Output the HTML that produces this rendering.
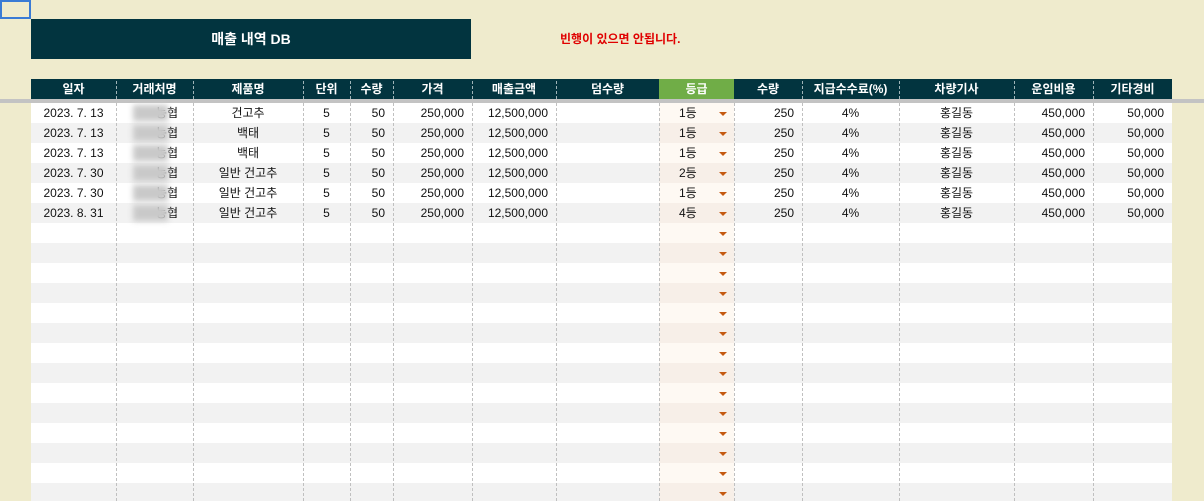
<!DOCTYPE html>
<html><head><meta charset="utf-8"><style>
*{margin:0;padding:0;box-sizing:border-box}
html{width:1204px;height:501px;overflow:hidden}
body{width:1204px;height:501px;overflow:hidden;background:#efebcd;position:relative;font-family:"Liberation Sans","Noto Sans CJK KR",sans-serif;font-size:12px;color:#111}
.sel{position:absolute;left:0;top:0;width:31px;height:19px;border:2px solid #3a7bd5}
.title{position:absolute;left:31px;top:19px;width:440px;height:40px;background:#02343f;color:#fff;font-weight:bold;font-size:14px;text-align:center;line-height:40px}
.warn{position:absolute;left:560px;top:30px;color:#e00000;font-weight:bold;font-size:12px;line-height:18px}
.gl{position:absolute;left:0;top:99px;width:1204px;height:4px;background:#c3c3c3}
.row{position:absolute;left:31px;width:1141px;height:20px;display:flex;line-height:20px;background:#fff}
.hd{top:79px;background:#02343f;color:#fff;font-weight:bold;height:20px}
.row div{flex:none;white-space:nowrap;overflow:hidden}
.c{text-align:center}.r{text-align:right;padding-right:8px}
.w1{width:85px}.w2{width:77px}.w3{width:110px}.w4{width:47px}.w5{width:43px}.w6{width:79px}.w7{width:84px}.w8{width:103px}.w9{width:75px}.w10{width:68px}.w11{width:97px}.w12{width:115px}.w13{width:79px}.w14{width:79px}
.sp{width:525px}
.g{background:#fef9f3;position:relative;padding-left:20px}
.alt{background:#f2f2f2}.alt .g{background:#f7efe8}
.hd .g{background:#70ad47;padding-left:0;text-align:center}
.g i{position:absolute;left:60px;top:9px;width:0;height:0;border-left:4px solid transparent;border-right:4px solid transparent;border-top:4px solid #c55a11}
.v{position:absolute;top:103px;height:398px;border-left:1px dashed #c0c0c0}
.hv{position:absolute;top:81px;height:18px;border-left:1px dashed #9fb4b8}
.blur{position:absolute;left:133px;width:35px;height:16px;background:#c9c9c9;filter:blur(3px)}
</style></head><body>
<div class="sel"></div>
<div class="title">매출 내역 DB</div>
<div class="warn">빈행이 있으면 안됩니다.</div>
<div class="row hd"><div class="w1 c">일자</div><div class="w2 c">거래처명</div><div class="w3 c">제품명</div><div class="w4 c">단위</div><div class="w5 c">수량</div><div class="w6 c">가격</div><div class="w7 c">매출금액</div><div class="w8 c">덤수량</div><div class="w9 g">등급</div><div class="w10 c">수량</div><div class="w11 c">지급수수료(%)</div><div class="w12 c">차량기사</div><div class="w13 c">운임비용</div><div class="w14 c">기타경비</div></div>
<div class="gl"></div>
<div class="row" style="top:103px"><div class="w1 c">2023. 7. 13</div><div class="w2 r" style="padding-right:15px">농협</div><div class="w3 c">건고추</div><div class="w4 c">5</div><div class="w5 r">50</div><div class="w6 r">250,000</div><div class="w7 r">12,500,000</div><div class="w8"></div><div class="w9 g">1등<i></i></div><div class="w10 r">250</div><div class="w11 c">4%</div><div class="w12 c">홍길동</div><div class="w13 r">450,000</div><div class="w14 r">50,000</div></div>
<div class="row alt" style="top:123px"><div class="w1 c">2023. 7. 13</div><div class="w2 r" style="padding-right:15px">농협</div><div class="w3 c">백태</div><div class="w4 c">5</div><div class="w5 r">50</div><div class="w6 r">250,000</div><div class="w7 r">12,500,000</div><div class="w8"></div><div class="w9 g">1등<i></i></div><div class="w10 r">250</div><div class="w11 c">4%</div><div class="w12 c">홍길동</div><div class="w13 r">450,000</div><div class="w14 r">50,000</div></div>
<div class="row" style="top:143px"><div class="w1 c">2023. 7. 13</div><div class="w2 r" style="padding-right:15px">농협</div><div class="w3 c">백태</div><div class="w4 c">5</div><div class="w5 r">50</div><div class="w6 r">250,000</div><div class="w7 r">12,500,000</div><div class="w8"></div><div class="w9 g">1등<i></i></div><div class="w10 r">250</div><div class="w11 c">4%</div><div class="w12 c">홍길동</div><div class="w13 r">450,000</div><div class="w14 r">50,000</div></div>
<div class="row alt" style="top:163px"><div class="w1 c">2023. 7. 30</div><div class="w2 r" style="padding-right:15px">농협</div><div class="w3 c">일반 건고추</div><div class="w4 c">5</div><div class="w5 r">50</div><div class="w6 r">250,000</div><div class="w7 r">12,500,000</div><div class="w8"></div><div class="w9 g">2등<i></i></div><div class="w10 r">250</div><div class="w11 c">4%</div><div class="w12 c">홍길동</div><div class="w13 r">450,000</div><div class="w14 r">50,000</div></div>
<div class="row" style="top:183px"><div class="w1 c">2023. 7. 30</div><div class="w2 r" style="padding-right:15px">농협</div><div class="w3 c">일반 건고추</div><div class="w4 c">5</div><div class="w5 r">50</div><div class="w6 r">250,000</div><div class="w7 r">12,500,000</div><div class="w8"></div><div class="w9 g">1등<i></i></div><div class="w10 r">250</div><div class="w11 c">4%</div><div class="w12 c">홍길동</div><div class="w13 r">450,000</div><div class="w14 r">50,000</div></div>
<div class="row alt" style="top:203px"><div class="w1 c">2023. 8. 31</div><div class="w2 r" style="padding-right:15px">농협</div><div class="w3 c">일반 건고추</div><div class="w4 c">5</div><div class="w5 r">50</div><div class="w6 r">250,000</div><div class="w7 r">12,500,000</div><div class="w8"></div><div class="w9 g">4등<i></i></div><div class="w10 r">250</div><div class="w11 c">4%</div><div class="w12 c">홍길동</div><div class="w13 r">450,000</div><div class="w14 r">50,000</div></div>
<div class="row" style="top:223px"><div class="sp"></div><div class="w8"></div><div class="w9 g"><i></i></div></div>
<div class="row alt" style="top:243px"><div class="sp"></div><div class="w8"></div><div class="w9 g"><i></i></div></div>
<div class="row" style="top:263px"><div class="sp"></div><div class="w8"></div><div class="w9 g"><i></i></div></div>
<div class="row alt" style="top:283px"><div class="sp"></div><div class="w8"></div><div class="w9 g"><i></i></div></div>
<div class="row" style="top:303px"><div class="sp"></div><div class="w8"></div><div class="w9 g"><i></i></div></div>
<div class="row alt" style="top:323px"><div class="sp"></div><div class="w8"></div><div class="w9 g"><i></i></div></div>
<div class="row" style="top:343px"><div class="sp"></div><div class="w8"></div><div class="w9 g"><i></i></div></div>
<div class="row alt" style="top:363px"><div class="sp"></div><div class="w8"></div><div class="w9 g"><i></i></div></div>
<div class="row" style="top:383px"><div class="sp"></div><div class="w8"></div><div class="w9 g"><i></i></div></div>
<div class="row alt" style="top:403px"><div class="sp"></div><div class="w8"></div><div class="w9 g"><i></i></div></div>
<div class="row" style="top:423px"><div class="sp"></div><div class="w8"></div><div class="w9 g"><i></i></div></div>
<div class="row alt" style="top:443px"><div class="sp"></div><div class="w8"></div><div class="w9 g"><i></i></div></div>
<div class="row" style="top:463px"><div class="sp"></div><div class="w8"></div><div class="w9 g"><i></i></div></div>
<div class="row alt" style="top:483px;height:18px"><div class="sp"></div><div class="w8"></div><div class="w9 g"><i></i></div></div>
<div class="blur" style="top:105px"></div><div class="blur" style="top:125px"></div><div class="blur" style="top:145px"></div><div class="blur" style="top:165px"></div><div class="blur" style="top:185px"></div><div class="blur" style="top:205px"></div>
<div class="v" style="left:116px"></div><div class="v" style="left:193px"></div><div class="v" style="left:303px"></div><div class="v" style="left:350px"></div><div class="v" style="left:393px"></div><div class="v" style="left:472px"></div><div class="v" style="left:556px"></div><div class="v" style="left:659px"></div><div class="v" style="left:734px"></div><div class="v" style="left:802px"></div><div class="v" style="left:899px"></div><div class="v" style="left:1014px"></div><div class="v" style="left:1093px"></div>
<div class="hv" style="left:116px"></div><div class="hv" style="left:193px"></div><div class="hv" style="left:303px"></div><div class="hv" style="left:350px"></div><div class="hv" style="left:393px"></div><div class="hv" style="left:472px"></div><div class="hv" style="left:556px"></div><div class="hv" style="left:802px"></div><div class="hv" style="left:899px"></div><div class="hv" style="left:1014px"></div><div class="hv" style="left:1093px"></div>
</body></html>
